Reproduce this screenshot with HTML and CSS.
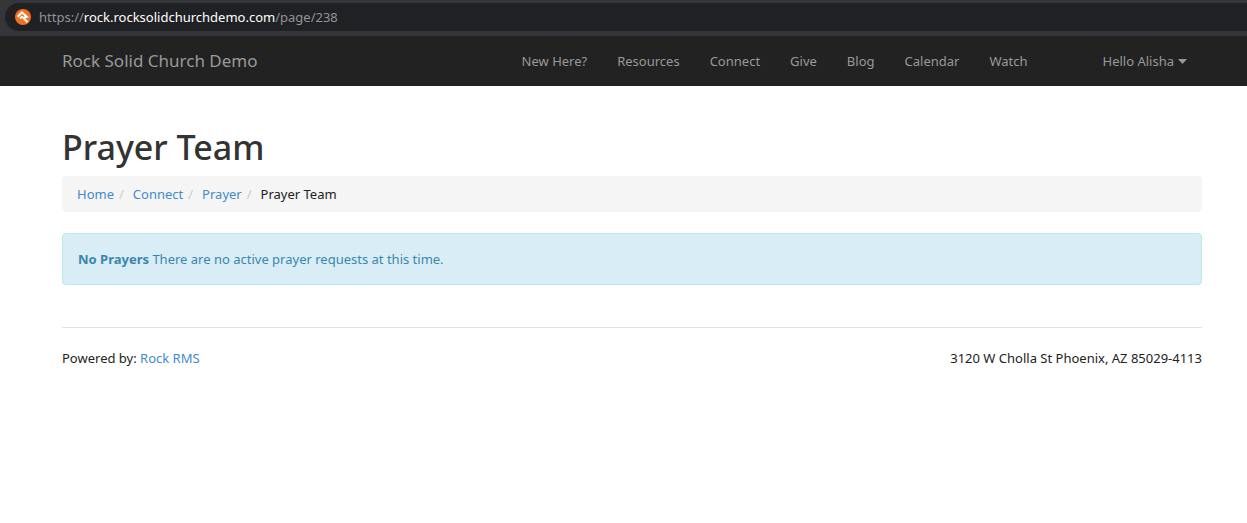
FILE: index.html
```html
<!DOCTYPE html>
<html lang="en">
<head>
<meta charset="utf-8">
<meta name="viewport" content="width=device-width, initial-scale=1">
<title>Prayer Team</title>
<link rel="stylesheet" href="styles.css">
</head>
<body>
<div class="browser-bar">
  <div class="address">
    <svg class="favicon" viewBox="0 0 16 16" aria-hidden="true">
      <circle cx="8" cy="8" r="8" fill="#f37021"/>
      <path d="M2.600 7.800 7 3.400 11.800 7.800 8.300 8.800 12.500 13.200" fill="none" stroke="#fff" stroke-width="2"/>
      <path d="M5 9.500 7.400 7.100" fill="none" stroke="#fff" stroke-width="1.800"/>
    </svg>
    <span class="url">https://<span class="host">rock.rocksolidchurchdemo.com</span>/page/238</span>
  </div>
</div>
<header class="navbar">
  <div class="container navbar-inner">
    <a class="brand" href="#">Rock Solid Church Demo</a>
    <nav class="menu" aria-label="Main">
      <a href="#">New Here?</a>
      <a href="#">Resources</a>
      <a href="#">Connect</a>
      <a href="#">Give</a>
      <a href="#">Blog</a>
      <a href="#">Calendar</a>
      <a href="#">Watch</a>
    </nav>
    <button class="login" type="button" aria-haspopup="true">Hello Alisha <svg class="caret" viewBox="0 0 9 5" aria-hidden="true"><path d="M0 0h9L4.500 5z" fill="currentColor"/></svg></button>
  </div>
</header>
<main class="container">
  <h1 class="title">Prayer Team</h1>
  <nav aria-label="Breadcrumb">
    <ol class="breadcrumb">
      <li><a href="#">Home</a></li>
      <li><a href="#">Connect</a></li>
      <li><a href="#">Prayer</a></li>
      <li aria-current="page">Prayer Team</li>
    </ol>
  </nav>
  <div class="alert" role="status"><strong>No Prayers</strong> There are no active prayer requests at this time.</div>
</main>
<div class="container">
  <footer class="footer">
    <div>Powered by: <a href="#">Rock RMS</a></div>
    <div>3120 W Cholla St Phoenix, AZ 85029-4113</div>
  </footer>
</div>
</body>
</html>
```
FILE: styles.css
```css
* { box-sizing: border-box; }
body {
  margin: 0;
  background: #fff;
  color: #222;
  font-family: "Noto Sans", "Open Sans", sans-serif;
  font-size: 13px;
  line-height: 20px;
}
a { color: #428bca; text-decoration: none; }

.browser-bar { padding: 3px 0 5px 5px; background: #35363a; }
.address {
  display: flex;
  align-items: center;
  gap: 8px;
  height: 28px;
  padding-left: 10px;
  border-radius: 14px 0 0 14px;
  background: #202124;
}
.favicon { width: 16px; height: 16px; }
.url { color: #919396; }
.host { color: #fff; }

.container {
  max-width: 1217px;
  padding: 0 15px;
}
@media (min-width: 1200px) {
  .container { padding-left: 62px; }
}
.navbar { background: #222; }
.navbar-inner { display: flex; flex-wrap: wrap; align-items: center; min-height: 50px; }
.brand { margin-right: auto; color: #999; font-size: 17px; }
.menu { display: flex; flex-wrap: wrap; }
.menu a { padding: 15px; color: #999; }
.login {
  display: flex;
  align-items: center;
  gap: 4px;
  margin-left: 45px;
  padding: 15px;
  border: 0;
  background: none;
  color: #999;
  font: inherit;
}
.caret { width: 9px; height: 5px; }

.title {
  margin: 41px 0 9px;
  color: #333;
  font-size: 34px;
  font-weight: 500;
  line-height: 40px;
}
.breadcrumb {
  display: flex;
  margin: 0 0 21px;
  padding: 8px 15px;
  border-radius: 4px;
  background: #f5f5f5;
  list-style: none;
}
.breadcrumb li + li::before { content: "/"; padding: 0 9px 0 5px; color: #ccc; }
.alert {
  padding: 15px;
  border: 1px solid #bce8f1;
  border-radius: 4px;
  background: #d9edf7;
  color: #3a87ad;
}
.footer {
  display: flex;
  justify-content: space-between;
  margin-top: 42px;
  padding-top: 20px;
  border-top: 1px solid #e1e1e1;
}
```
